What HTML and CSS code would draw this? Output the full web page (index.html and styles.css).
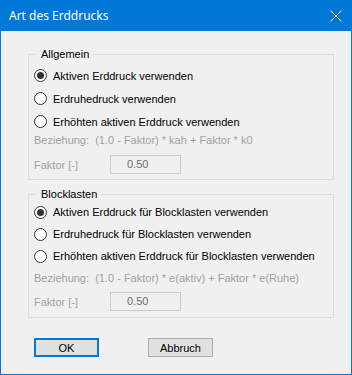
FILE: index.html
```html
<!DOCTYPE html>
<html lang="de">
<head>
  <meta charset="UTF-8">
  <title>Art des Erddrucks</title>
  <link rel="stylesheet" href="styles.css">
</head>
<body>
  <div class="window">
    <div class="titlebar">
      <span class="title">Art des Erddrucks</span>
      <svg class="close" viewBox="0 0 12 12" fill="none" stroke="#fff" stroke-width="1">
        <line x1="0.5" y1="0.5" x2="11.5" y2="11.5"></line>
        <line x1="11.5" y1="0.5" x2="0.5" y2="11.5"></line>
      </svg>
    </div>
    <div class="dialog">
      <fieldset class="group group-general">
        <legend>Allgemein</legend>
        <label class="option"><span class="radio checked"></span>Aktiven Erddruck verwenden</label>
        <label class="option"><span class="radio"></span>Erdruhedruck verwenden</label>
        <label class="option"><span class="radio"></span>Erhöhten aktiven Erddruck verwenden</label>
        <div class="formula">Beziehung:  (1.0 - Faktor) * kah + Faktor * k0</div>
        <div class="factor">
          <span class="factor-label">Faktor [-]</span>
          <span class="field">0.50</span>
        </div>
      </fieldset>
      <fieldset class="group group-block">
        <legend>Blocklasten</legend>
        <label class="option"><span class="radio checked"></span>Aktiven Erddruck für Blocklasten verwenden</label>
        <label class="option"><span class="radio"></span>Erdruhedruck für Blocklasten verwenden</label>
        <label class="option"><span class="radio"></span>Erhöhten aktiven Erddruck für Blocklasten verwenden</label>
        <div class="formula">Beziehung:  (1.0 - Faktor) * e(aktiv) + Faktor * e(Ruhe)</div>
        <div class="factor">
          <span class="factor-label">Faktor [-]</span>
          <span class="field">0.50</span>
        </div>
      </fieldset>
      <div class="buttons">
        <button class="btn btn-default">OK</button>
        <button class="btn">Abbruch</button>
      </div>
    </div>
  </div>
</body>
</html>
```

FILE: styles.css
```css
html, body {
  margin: 0;
  padding: 0;
  width: 352px;
  height: 375px;
  font-family: "Liberation Sans", Arial, sans-serif;
  font-size: 11px;
  color: #000;
}
.window {
  width: 352px;
  height: 375px;
  box-sizing: border-box;
  border: 1px solid #0078d7;
  border-top: none;
  background: #f0f0f0;
  display: flex;
  flex-direction: column;
}
.titlebar {
  height: 31px;
  margin: 0 -1px;
  background: #0078d7;
  display: flex;
  align-items: center;
  justify-content: space-between;
  padding: 0 10px 0 9px;
  color: #fff;
}
.title {
  font-family: "Noto Sans", sans-serif;
  font-size: 12px;
  line-height: 31px;
}
.close {
  width: 12px;
  height: 12px;
}
.dialog {
  flex: 1;
  display: flex;
  flex-direction: column;
}
.group {
  margin: 0 17px 0 27px;
  padding: 0 0 5px 5px;
  border: 1px solid #dcdcdc;
  min-inline-size: 0;
}
.group legend {
  padding: 0 4px 0 6px;
  margin-left: 1px;
  line-height: 14px;
}
.group-general {
  margin-top: 16px;
  padding-top: 3px;
}
.group-block {
  margin-top: 7px;
  padding-bottom: 6px;
}
.option {
  display: flex;
  align-items: center;
  height: 23px;
  white-space: nowrap;
}
.group-block .option {
  height: 22px;
}
.radio {
  width: 13px;
  height: 13px;
  box-sizing: border-box;
  border: 1px solid #333;
  border-radius: 50%;
  background: #fff;
  margin-right: 6px;
  display: flex;
  align-items: center;
  justify-content: center;
}
.radio.checked::after {
  content: "";
  width: 7px;
  height: 7px;
  border-radius: 50%;
  background: #333;
}
.formula {
  color: #a0a0a0;
  line-height: 14px;
  white-space: pre;
}
.group-block .formula {
  margin-top: 4px;
}
.factor {
  display: flex;
  align-items: center;
  margin-top: 8px;
}
.group-block .factor {
  margin-top: 7px;
}
.factor-label {
  color: #a0a0a0;
  width: 76px;
}
.field {
  width: 71px;
  height: 19px;
  box-sizing: border-box;
  border: 1px solid #cccccc;
  padding-left: 16px;
  line-height: 17px;
  color: #6d6d6d;
}
.buttons {
  display: flex;
  gap: 49px;
  margin-top: 20px;
  padding-left: 33px;
}
.btn {
  width: 65px;
  height: 19px;
  box-sizing: border-box;
  background: #e1e1e1;
  border: 1px solid #adadad;
  font-family: "Liberation Sans", Arial, sans-serif;
  font-size: 11px;
  color: #000;
  padding: 0;
}
.btn-default {
  border: 2px solid #0078d7;
}
```
